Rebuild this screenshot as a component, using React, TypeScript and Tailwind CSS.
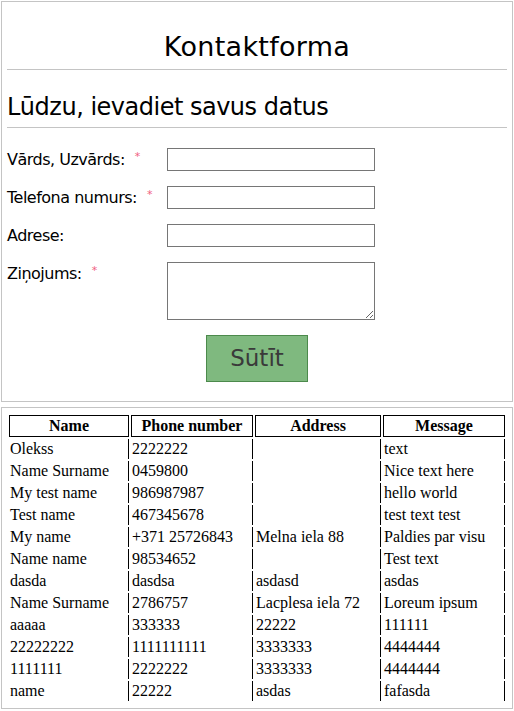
import React from 'react';

const rows: [string, string, string, string][] = [
  ['Olekss', '2222222', '', 'text'],
  ['Name Surname', '0459800', '', 'Nice text here'],
  ['My test name', '986987987', '', 'hello world'],
  ['Test name', '467345678', '', 'test text test'],
  ['My name', '+371 25726843', 'Melna iela 88', 'Paldies par visu'],
  ['Name name', '98534652', '', 'Test text'],
  ['dasda', 'dasdsa', 'asdasd', 'asdas'],
  ['Name Surname', '2786757', 'Lacplesa iela 72', 'Loreum ipsum'],
  ['aaaaa', '333333', '22222', '111111'],
  ['22222222', '1111111111', '3333333', '4444444'],
  ['1111111', '2222222', '3333333', '4444444'],
  ['name', '22222', 'asdas', 'fafasda'],
];

const Star = () => (
  <span className="ml-[10px] inline-block align-top text-[11px] leading-[18px] text-[#f0607e]">*</span>
);

const Field = ({ label, required }: { label: string; required?: boolean }) => (
  <div className="flex items-center h-[23px]">
    <label className="w-[160px] shrink-0 leading-[23px] tracking-[-0.5px]">
      {label}
      {required && <Star />}
    </label>
    <input type="text" className="w-[208px] h-[23px] border border-[#767676] bg-white" />
  </div>
);

export default function App() {
  return (
    <div className="p-px bg-white text-black min-h-[711px]">
      {/* Form */}
      <div className="border border-[#c4c4c4] p-[5px] font-['DejaVu_Sans',sans-serif]">
        <h1 className="mt-[25px] text-center text-[27px] leading-[30px] tracking-[0.3px]">Kontaktforma</h1>
        <div className="mt-[7px] h-px bg-[#c4c4c4]" />
        <h2 className="mt-[23px] text-[24px] leading-[28px] tracking-[-0.5px]">Lūdzu, ievadiet savus datus</h2>
        <div className="mt-[6px] h-px bg-[#c4c4c4]" />

        <div className="mt-[20px] flex flex-col gap-[15px] text-[16px]">
          <Field label="Vārds, Uzvārds:" required />
          <Field label="Telefona numurs:" required />
          <Field label="Adrese:" />
          <div className="flex items-start">
            <label className="w-[160px] shrink-0 leading-[23px] tracking-[-0.5px]">
              Ziņojums:<Star />
            </label>
            <textarea className="w-[208px] h-[58px] border border-[#767676] bg-white" />
          </div>
        </div>

        <div className="mt-[15px] mb-[14px] flex justify-center">
          <button className="w-[102px] h-[47px] bg-[#7fb97f] border border-[#4c8a4c] text-[#3a3a3a] text-[23px]">
            Sūtīt
          </button>
        </div>
      </div>

      {/* Table */}
      <div className="mt-[5px] border border-[#c4c4c4] p-[5px] font-['Liberation_Serif',serif] text-[16px] leading-[18px]">
        <table className="w-full border-separate border-spacing-[2px]">
          <thead>
            <tr>
              <th className="w-[120px] border border-black p-px font-bold text-center">Name</th>
              <th className="w-[122px] border border-black p-px font-bold text-center">Phone number</th>
              <th className="w-[126px] border border-black p-px font-bold text-center">Address</th>
              <th className="border border-black p-px font-bold text-center">Message</th>
            </tr>
          </thead>
          <tbody>
            {rows.map((r, i) => (
              <tr key={i}>
                {r.map((c, j) => (
                  <td key={j} className="border-r border-black p-px text-left h-[20px]">
                    {c}
                  </td>
                ))}
              </tr>
            ))}
          </tbody>
        </table>
      </div>
    </div>
  );
}
